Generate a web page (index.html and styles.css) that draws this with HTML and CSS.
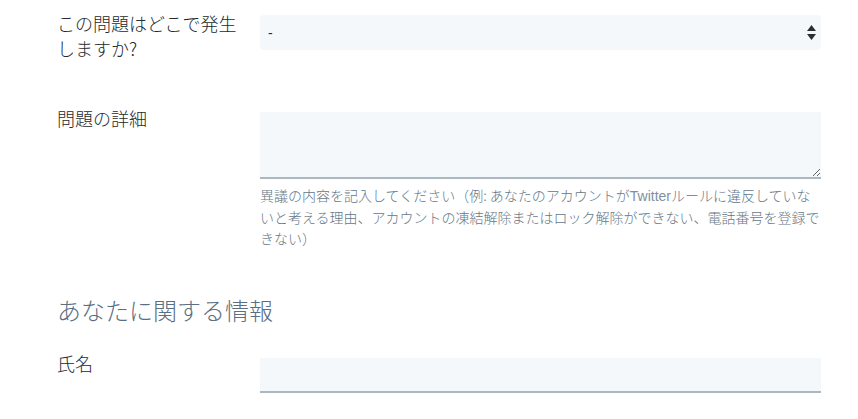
FILE: index.html
```html
<!DOCTYPE html>
<html lang="ja">
<head>
<meta charset="utf-8">
<link rel="stylesheet" href="styles.css">
</head>
<body>
<form class="form">
  <div class="row row-first">
    <label class="label">この問題はどこで発生しますか?</label>
    <div class="field">
      <div class="select-wrap">
        <select class="select"><option>-</option></select>
        <svg class="select-arrows" width="9" height="15" viewBox="0 0 9 15"><path d="M4.5 0 L9 6 L0 6 Z M0 9 L9 9 L4.5 15 Z" fill="#2a2f33"/></svg>
      </div>
    </div>
  </div>
  <div class="row row-detail">
    <label class="label">問題の詳細</label>
    <div class="field">
      <textarea class="textarea"></textarea>
      <p class="help">異議の内容を記入してください（例: あなたのアカウントが<span class="latin">Twitter</span>ルールに違反していないと考える理由、アカウントの凍結解除またはロック解除ができない、電話番号を登録できない）</p>
    </div>
  </div>
  <h2 class="section-title">あなたに関する情報</h2>
  <div class="row row-name">
    <label class="label">氏名</label>
    <div class="field">
      <input class="input" type="text">
    </div>
  </div>
</form>
</body>
</html>
```

FILE: styles.css
```css
* { box-sizing: border-box; }
html, body { margin: 0; padding: 0; background: #fff; }
body {
  font-family: "Noto Sans CJK JP", "Noto Sans", "Liberation Sans", sans-serif;
  color: #292f33;
}
.form {
  width: 821px;
  padding: 11px 0 0 57px;
}
.row {
  display: flex;
  align-items: flex-start;
}
.label {
  width: 203px;
  flex: none;
  padding-right: 15px;
  font-size: 18px;
  line-height: 25px;
  font-weight: 300;
  color: #24292d;
}
.field {
  flex: 1;
  min-width: 0;
}
.row-first .field { margin-top: 4px; }
.select-wrap { position: relative; }
.select {
  display: block;
  width: 100%;
  height: 35px;
  -webkit-appearance: none;
  appearance: none;
  border: none;
  border-radius: 4px;
  background: #f5f8fa;
  padding: 0 8px;
  font-family: "Liberation Sans", sans-serif;
  font-size: 14px;
  color: #292f33;
  outline: none;
}
.select-arrows {
  position: absolute;
  right: 5px;
  top: 10px;
}
.row-detail { margin-top: 45px; }
.row-detail .field { margin-top: 6px; }
.textarea {
  display: block;
  width: 100%;
  height: 67px;
  border: none;
  border-bottom: 2px solid #aab8c2;
  background: #f5f8fa;
  resize: vertical;
  outline: none;
  margin: 0;
  padding: 6px 8px;
  font-family: inherit;
}
.help {
  margin: 6px 0 0;
  font-size: 14px;
  line-height: 21px;
  font-weight: 300;
  color: #657786;
  text-spacing-trim: space-all;
}
.latin {
  font-family: "Liberation Sans", sans-serif;
  color: #7f8f9c;
}
.section-title {
  margin: 46px 0 0;
  font-size: 24px;
  line-height: 30px;
  font-weight: 300;
  color: #5b6f82;
}
.row-name { margin-top: 26px; }
.row-name .field { margin-top: 7px; }
.input {
  display: block;
  width: 100%;
  height: 35px;
  border: none;
  border-bottom: 2px solid #aab8c2;
  background: #f5f8fa;
  outline: none;
  padding: 0 8px;
  margin: 0;
}
```
